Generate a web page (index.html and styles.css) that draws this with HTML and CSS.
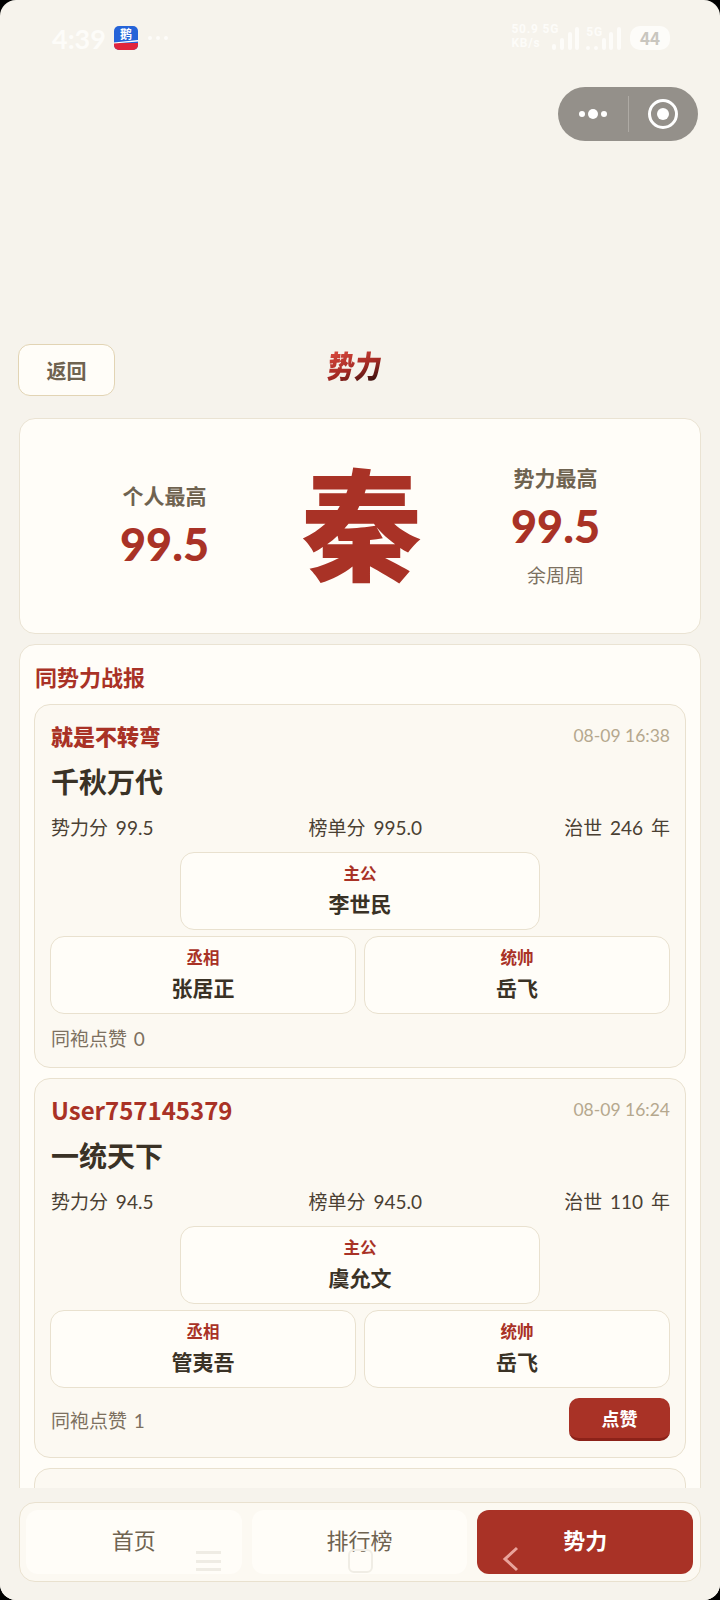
FILE: index.html
```html
<!DOCTYPE html>
<html lang="zh-CN">
<head>
  <meta charset="UTF-8" />
  <meta name="viewport" content="width=device-width, initial-scale=1.0"/>
  <title>势力</title>
  <link rel="stylesheet" href="styles.css">
</head>
<body>
  <div class="screen">
    <!-- status bar -->
    <div class="status">
      <div class="status-left">
        <span class="clock">4:39</span>
        <svg class="app-icon" viewBox="0 0 24 24" width="24" height="24">
          <rect width="24" height="24" rx="5" fill="#2563d8"/>
          <path d="M0 17h24v2a5 5 0 0 1-5 5H5a5 5 0 0 1-5-5z" fill="#e0243c"/>
          <path d="M0 16.4 24 14v1.6L0 17.6z" fill="#fff"/>
          <text x="12" y="13" class="app-icon-text">鹅</text>
        </svg>
        <span class="more-dots"><i></i><i></i><i></i></span>
      </div>
      <div class="status-right">
        <div class="net-speed"><span>50.9 5G</span><span>KB/s</span></div>
        <div class="bars">
          <i class="h1"></i><i class="h2"></i><i class="h3"></i><i class="h4"></i>
        </div>
        <div class="sim2">
          <span class="sim2-label">5G</span>
          <div class="bars">
            <i class="h0"></i><i class="h0"></i><i class="h2"></i><i class="h3"></i><i class="h4"></i>
          </div>
        </div>
        <span class="battery">44</span>
      </div>
    </div>

    <!-- mini program capsule -->
    <div class="capsule-row">
      <div class="capsule">
        <div class="capsule-dots"><i></i><i class="big"></i><i></i></div>
        <div class="capsule-line"></div>
        <div class="capsule-target"><i></i></div>
      </div>
    </div>

    <div class="topbar">
      <button class="back-btn">返回</button>
      <div class="page-title">势力</div>
    </div>

    <div class="hero">
      <div class="hero-col">
        <div class="hero-label">个人最高</div>
        <div class="hero-num">99.5</div>
      </div>
      <div class="hero-char">秦</div>
      <div class="hero-col hero-col-right">
        <div class="hero-label">势力最高</div>
        <div class="hero-num">99.5</div>
        <div class="hero-owner">余周周</div>
      </div>
    </div>

    <div class="panel">
      <h2 class="panel-title">同势力战报</h2>

      <div class="report">
        <div class="report-head">
          <span class="report-name">就是不转弯</span>
          <span class="report-time">08-09 16:38</span>
        </div>
        <div class="report-title">千秋万代</div>
        <div class="report-stats">
          <span>势力分 99.5</span>
          <span>榜单分 995.0</span>
          <span>治世 246 年</span>
        </div>
        <div class="officers">
          <div class="officer officer-main"><b>主公</b><strong>李世民</strong></div>
          <div class="officer"><b>丞相</b><strong>张居正</strong></div>
          <div class="officer"><b>统帅</b><strong>岳飞</strong></div>
        </div>
        <div class="report-foot">
          <span>同袍点赞 0</span>
        </div>
      </div>

      <div class="report">
        <div class="report-head">
          <span class="report-name report-name-latin">User757145379</span>
          <span class="report-time">08-09 16:24</span>
        </div>
        <div class="report-title">一统天下</div>
        <div class="report-stats">
          <span>势力分 94.5</span>
          <span>榜单分 945.0</span>
          <span>治世 110 年</span>
        </div>
        <div class="officers">
          <div class="officer officer-main"><b>主公</b><strong>虞允文</strong></div>
          <div class="officer"><b>丞相</b><strong>管夷吾</strong></div>
          <div class="officer"><b>统帅</b><strong>岳飞</strong></div>
        </div>
        <div class="report-foot">
          <span>同袍点赞 1</span>
          <button class="like-btn">点赞</button>
        </div>
      </div>

      <div class="report report-empty"></div>
    </div>

    <!-- bottom tabs -->
    <div class="tabbar">
      <div class="tabs">
        <div class="tab">首页</div>
        <div class="tab">排行榜</div>
        <div class="tab tab-on">势力</div>
      </div>
    </div>

    <!-- phone gesture keys, lying over the tabs -->
    <div class="navkey navkey-menu"><i></i><i></i><i></i></div>
    <div class="navkey navkey-home"></div>
    <svg class="navkey navkey-back" viewBox="0 0 18 26" width="18" height="26">
      <path d="M15 2 3 13l12 11" fill="none" stroke="#e9a39b" stroke-width="3"/>
    </svg>
  </div>
</body>
</html>
```

FILE: styles.css
```css
* {
  box-sizing: border-box;
}

html, body {
  margin: 0;
  height: 1600px;
  background: #000;
  overflow: hidden;
}

body {
  font-family: "Noto Sans CJK SC", "Noto Sans", sans-serif;
  color: #3a3226;
}

.screen {
  position: relative;
  width: 720px;
  height: 1600px;
  background: #f6f3ec;
  border-radius: 16px;
  overflow: hidden;
}

/* status bar */

.status {
  height: 87px;
  padding: 26px 50px 0 52px;
  display: flex;
  justify-content: space-between;
  align-items: flex-start;
  color: #fdfcf9;
}

.status-left {
  display: flex;
  align-items: center;
  height: 24px;
}

.clock {
  font-family: "Lato", sans-serif;
  font-size: 27px;
  font-weight: 700;
  width: 62px;
}

.app-icon-text {
  font-size: 12px;
  font-weight: 700;
  fill: #fff;
  text-anchor: middle;
}

.more-dots {
  margin-left: 10px;
  display: flex;
  gap: 4px;
}

.more-dots i {
  width: 4px;
  height: 4px;
  border-radius: 50%;
  background: #fdfcf9;
}

.status-right {
  display: flex;
  align-items: flex-end;
  gap: 5px;
  height: 24px;
}

.net-speed {
  display: flex;
  flex-direction: column;
  margin-right: -12px;
  font-family: "Roboto", sans-serif;
  font-size: 12px;
  font-weight: 700;
  letter-spacing: 0.8px;
  line-height: 14.1px;
}

.bars {
  display: flex;
  align-items: flex-end;
  gap: 3.7px;
  height: 23px;
}

.bars i {
  width: 4px;
  background: #fdfcf9;
  border-radius: 2px;
}

.bars .h0 { height: 4px; }
.bars .h1 { height: 6px; }
.bars .h2 { height: 12px; }
.bars .h3 { height: 18px; }
.bars .h4 { height: 23px; }

.sim2 {
  position: relative;
  margin-left: 2px;
}

.sim2-label {
  position: absolute;
  left: 0;
  top: -2px;
  font-family: "Roboto", sans-serif;
  font-size: 12px;
  font-weight: 700;
  letter-spacing: 0.8px;
  line-height: 14.1px;
}

.battery {
  width: 40px;
  height: 24px;
  margin-left: 4px;
  background: #fdfcf9;
  border-radius: 10px;
  color: #c9c6bf;
  font-size: 17px;
  font-weight: 700;
  line-height: 24px;
  text-align: center;
}

/* capsule */

.capsule-row {
  display: flex;
  justify-content: flex-end;
  padding-right: 22px;
}

.capsule {
  width: 140px;
  height: 54px;
  background: #94908a;
  border-radius: 27px;
  display: flex;
  align-items: center;
}

.capsule-dots {
  flex: 1;
  display: flex;
  justify-content: center;
  align-items: center;
  gap: 3px;
}

.capsule-dots i {
  width: 6px;
  height: 6px;
  border-radius: 50%;
  background: #fff;
}

.capsule-dots .big {
  width: 10px;
  height: 10px;
}

.capsule-line {
  width: 1px;
  height: 36px;
  background: #aeaaa4;
}

.capsule-target {
  flex: 1;
  display: flex;
  justify-content: center;
}

.capsule-target i {
  width: 30px;
  height: 30px;
  border-radius: 50%;
  border: 3px solid #fff;
  display: flex;
  align-items: center;
  justify-content: center;
}

.capsule-target i::after {
  content: "";
  width: 12px;
  height: 12px;
  border-radius: 50%;
  background: #fff;
}

/* top bar */

.topbar {
  position: relative;
  margin: 203px 18px 0;
  height: 52px;
}

.back-btn {
  width: 97px;
  height: 52px;
  background: #fffdf8;
  border: 1px solid #e2d4b4;
  border-radius: 12px;
  color: #6f6350;
  font-family: inherit;
  font-size: 20px;
  font-weight: 700;
}

.page-title {
  position: absolute;
  left: 310px;
  top: 1px;
  font-size: 27px;
  font-weight: 900;
  line-height: 40px;
  transform: skewX(-8deg) scaleY(1.15);
  background: linear-gradient(160deg, #d2453a 20%, #a52a24 55%, #2c0c0a 90%);
  -webkit-background-clip: text;
  background-clip: text;
  color: transparent;
}

/* hero */

.hero {
  margin: 22px 19px 0;
  height: 216px;
  padding: 4px 16px 0;
  background: #fffdf8;
  border: 1px solid #eae3d3;
  border-radius: 16px;
  display: grid;
  grid-template-columns: 1fr 130px 1fr;
  gap: 2px;
  align-items: center;
}

.hero-col {
  text-align: center;
}

.hero-col-right {
  margin-bottom: 4px;
}

.hero-label {
  color: #6f6350;
  font-size: 21px;
  font-weight: 700;
  line-height: 32px;
}

.hero-num {
  color: #a93226;
  font-family: "Lato", "Noto Sans CJK SC", sans-serif;
  font-size: 45px;
  font-weight: 900;
  line-height: 66px;
}

.hero-owner {
  color: #7c7060;
  font-size: 19px;
  line-height: 32px;
}

.hero-char {
  color: #a93226;
  font-size: 121px;
  font-weight: 900;
  line-height: 140px;
  text-align: center;
  margin-bottom: 18px;
  padding-left: 3px;
}

/* panel with reports */

.panel {
  margin: 10px 19px 0;
  height: 900px;
  padding: 15px 14px;
  background: #fffdf8;
  border: 1px solid #eae3d3;
  border-radius: 16px;
}

.panel-title {
  margin: 0 0 12px 1px;
  color: #a93226;
  font-size: 22px;
  font-weight: 700;
  line-height: 32px;
}

.report {
  margin-bottom: 10px;
  padding: 14px 15px 16px 16px;
  background: #fcf9f2;
  border: 1px solid #e9e1cf;
  border-radius: 16px;
}

.report-empty {
  height: 120px;
}

.report-head {
  display: flex;
  justify-content: space-between;
  align-items: center;
  height: 32px;
}

.report-name {
  color: #a93226;
  font-size: 22px;
  font-weight: 900;
}

.report-name-latin {
  font-size: 24px;
  font-weight: 700;
}

.report-time {
  color: #b5a88e;
  font-family: "Lato", sans-serif;
  font-size: 17.5px;
}

.report-title {
  margin-top: 8px;
  font-size: 28px;
  font-weight: 700;
  line-height: 44px;
}

.report-stats {
  margin-top: 10px;
  display: flex;
  justify-content: space-between;
  color: #4a4033;
  font-family: "Lato", "Noto Sans CJK SC", sans-serif;
  font-size: 19px;
  line-height: 30px;
  word-spacing: 3px;
}

.report-stats span:nth-child(2) {
  margin-left: 13px;
}

.officers {
  margin: 9px 0 0 -1px;
  display: grid;
  grid-template-columns: 1fr 1fr;
  gap: 6px 8px;
}

.officer {
  height: 78px;
  padding-bottom: 4px;
  background: #fffdf8;
  border: 1px solid #e9e1cf;
  border-radius: 14px;
  display: flex;
  flex-direction: column;
  align-items: center;
  justify-content: center;
  gap: 3px;
}

.officer-main {
  grid-column: 1 / 3;
  justify-self: center;
  width: 360px;
}

.officer b {
  color: #a93226;
  font-size: 16.5px;
  font-weight: 700;
  line-height: 24px;
}

.officer strong {
  font-size: 21px;
  font-weight: 700;
  line-height: 30px;
}

.report-foot {
  margin-top: 10px;
  min-height: 26px;
  display: flex;
  justify-content: space-between;
  align-items: center;
  color: #7c7060;
  font-family: "Lato", "Noto Sans CJK SC", sans-serif;
  font-size: 19px;
  word-spacing: 2px;
}

.like-btn {
  width: 101px;
  height: 43px;
  background: #a93226;
  border: 0;
  border-bottom: 3px solid #8c2219;
  border-radius: 10px;
  color: #fff;
  font-family: "Noto Sans CJK SC", sans-serif;
  font-size: 18px;
  font-weight: 700;
}

/* bottom tabs */

.tabbar {
  position: absolute;
  left: 0;
  right: 0;
  bottom: 0;
  height: 112px;
  padding: 14px 19px 0;
  background: #f6f3ec;
}

.tabs {
  height: 80px;
  padding: 7px 7px 7px 6px;
  background: #fcf9f2;
  border: 1px solid #e9e1cf;
  border-radius: 16px;
  display: grid;
  grid-template-columns: repeat(3, 1fr);
  gap: 10px;
}

.tab {
  background: #fffdf8;
  border-radius: 12px;
  color: #6f6350;
  font-size: 22px;
  line-height: 58px;
  text-align: center;
}

.tab-on {
  background: #a93226;
  color: #fff;
  font-weight: 700;
}

/* gesture keys */

.navkey {
  position: absolute;
}

.navkey-menu {
  left: 196px;
  top: 1551px;
  width: 25px;
  height: 20px;
  display: flex;
  flex-direction: column;
  justify-content: space-between;
}

.navkey-menu i {
  height: 3px;
  background: #efece4;
}

.navkey-home {
  left: 348px;
  top: 1549px;
  width: 25px;
  height: 24px;
  border: 2px solid #f0ede5;
  border-radius: 6px;
}

.navkey-back {
  left: 502px;
  top: 1546px;
}
```
